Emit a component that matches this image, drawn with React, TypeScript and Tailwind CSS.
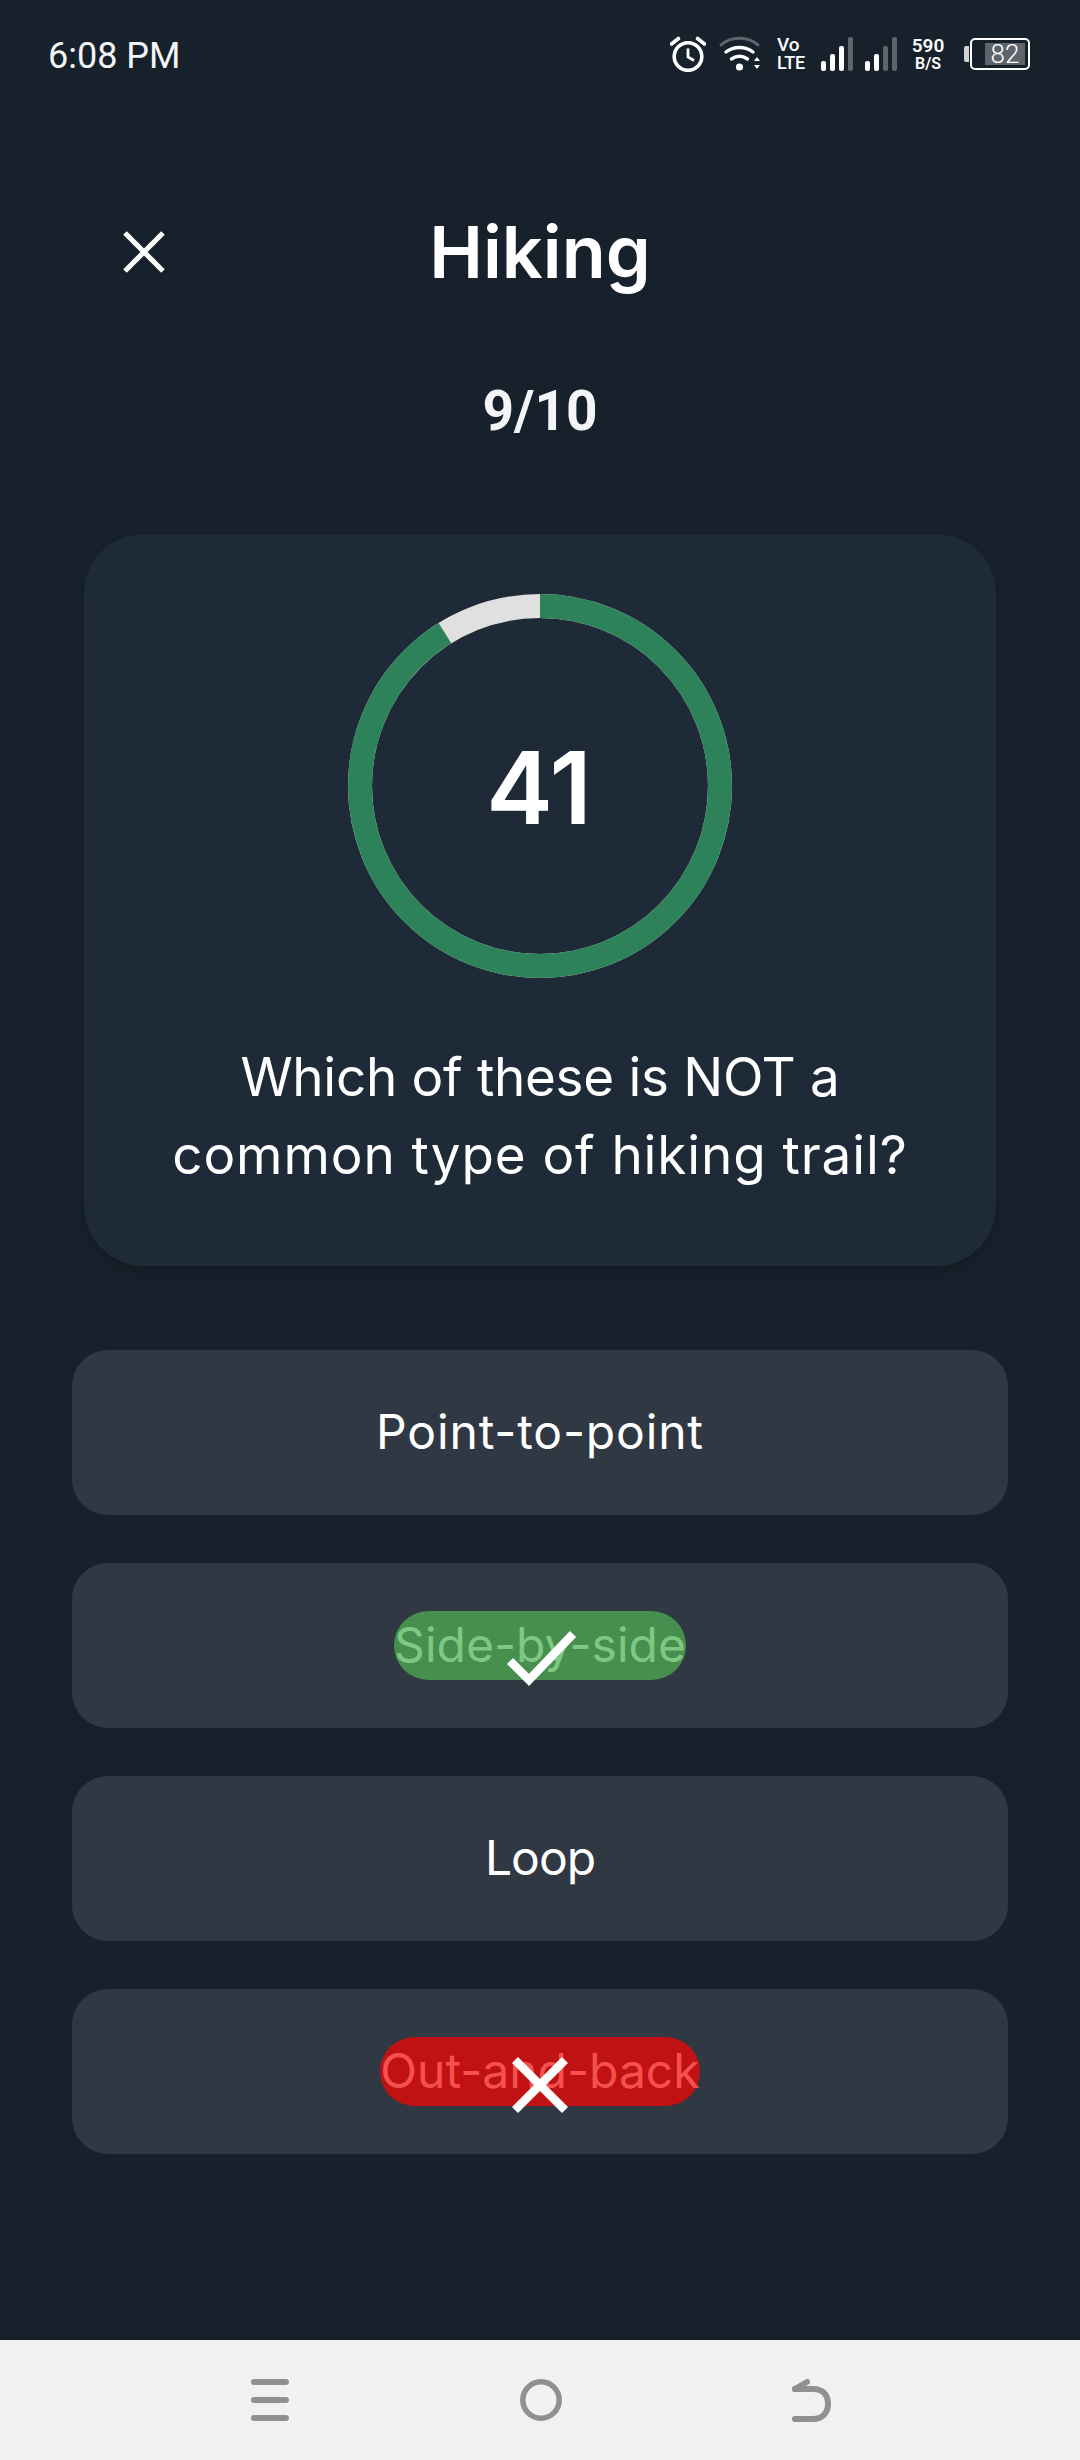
export default function App() {
  const r = 180;
  const c = 2 * Math.PI * r;
  const frac = 0.0889;
  const options = [
    { label: "Point-to-point", track: "tracking-[0.85px]" },
    { label: "Side-by-side", kind: "ok", track: "tracking-[0px]" },
    { label: "Loop", track: "tracking-[-1px]" },
    { label: "Out-and-back", kind: "bad", track: "tracking-[0px]" },
  ];
  return (
    <div className="w-[1080px] h-[2460px] bg-[#17212b] flex flex-col text-white overflow-hidden font-['Inter','Liberation_Sans',sans-serif]">
      {/* Status bar */}
      <div className="h-[108px] flex items-center pl-[48px] pr-[50px] font-['Roboto',sans-serif]">
        <span className="text-[36px] leading-none text-[#f4f5f6] mt-[4px]">6:08 PM</span>
        <div className="ml-auto flex items-center">
          <svg width="36" height="36" viewBox="0 0 36 36" fill="none" stroke="white" strokeWidth="3.6" className="mr-[13px]">
            <circle cx="18" cy="20.5" r="13.8" />
            <path d="M18 12.5v8.5l6 3.5" strokeWidth="2.8" />
            <path d="M1.500 8l7-5.500M34.500 8l-7-5.500" strokeWidth="3.6" strokeLinecap="round" />
          </svg>
          <svg width="42" height="36" viewBox="0 0 42 36" fill="none" className="mr-[16px]">
            <path d="M2 9C12 0 29 0 39 9" stroke="#5d646c" strokeWidth="3" strokeLinecap="round" />
            <path d="M7 16c8-6 19-6 27 0" stroke="white" strokeWidth="3.4" strokeLinecap="round" />
            <path d="M12.5 23c5-3.5 11-3.5 16 0" stroke="white" strokeWidth="3.4" strokeLinecap="round" />
            <circle cx="20.5" cy="31" r="3.6" fill="white" />
            <path d="M35 25h6l-3-4zM35 29h6l-3 4z" fill="white" />
          </svg>
          <div className="flex flex-col items-start w-[30px] mr-[13px] font-medium text-[18px] leading-[18px] tracking-[-0.2px] text-white">
            <span className="text-[19px]">Vo</span>
            <span>LTE</span>
          </div>
          <svg width="33" height="34" viewBox="0 0 33 34" className="mr-[11px]">
            <rect x="1" y="24" width="5" height="10" rx="2" fill="white" />
            <rect x="10" y="17" width="5" height="17" rx="2" fill="white" />
            <rect x="19" y="9" width="5" height="25" rx="2" fill="white" />
            <rect x="28" y="0" width="5" height="34" rx="2" fill="#5d646c" />
          </svg>
          <svg width="33" height="34" viewBox="0 0 33 34" className="mr-[14px]">
            <rect x="1" y="24" width="5" height="10" rx="2" fill="white" />
            <rect x="10" y="17" width="5" height="17" rx="2" fill="white" />
            <rect x="19" y="9" width="5" height="25" rx="2" fill="#5d646c" />
            <rect x="28" y="0" width="5" height="34" rx="2" fill="#5d646c" />
          </svg>
          <div className="flex flex-col items-center w-[34px] mr-[19px] font-semibold leading-none text-white">
            <span className="text-[19px] leading-[20px]">590</span>
            <span className="text-[16px] leading-[16px]">B/S</span>
          </div>
          <div className="flex items-center">
            <div className="w-[5px] h-[16px] bg-white rounded-l-[2px] mr-[1px] opacity-80" />
            <div className="w-[60px] h-[32px] border-2 border-white rounded-[5px] flex items-center pl-[13px] pr-[3px]">
              <span className="w-[40px] h-[22px] bg-[#5d646c] text-[26px] leading-[22px] font-light text-center text-white">82</span>
            </div>
          </div>
        </div>
      </div>

      {/* Header */}
      <div className="mt-[84px] h-[120px] grid grid-cols-[1fr_auto_1fr] items-center px-[123px]">
        <svg width="42" height="42" viewBox="0 0 42 42" fill="none" stroke="white" strokeWidth="5">
          <path d="M2 2L40 40M40 2L2 40" />
        </svg>
        <span className="text-[72px] leading-none font-semibold tracking-[0px] text-white">Hiking</span>
        <span />
      </div>

      <div className="mt-[69px] h-[60px] flex items-center justify-center font-['Roboto',sans-serif] text-[55px] leading-none font-bold text-[#f4f5f6]">
        9/10
      </div>

      {/* Question card */}
      <div className="mt-[93px] mx-[84px] h-[732px] rounded-[60px] bg-[#1e2a38] shadow-[0_6px_10px_rgba(0,0,0,0.14)] flex flex-col items-center pt-[60px]">
        <div className="relative w-[384px] h-[384px] flex items-center justify-center">
          <svg width="384" height="384" viewBox="0 0 384 384" className="absolute inset-0 -rotate-90">
            <circle cx="192" cy="192" r={r} fill="none" stroke="#e0e0e0" strokeWidth="24" />
            <circle
              cx="192"
              cy="192"
              r={r}
              fill="none"
              stroke="#2e8259"
              strokeWidth="24"
              strokeDasharray={`${c * (1 - frac)} ${c}`}
            />
          </svg>
          <span className="text-[100px] leading-none font-semibold text-white mt-[3px] mr-[2px]">41</span>
        </div>
        <p className="mt-[60px] text-center text-[53px] leading-[78px] text-white">
          <span className="tracking-[-0.3px]">Which of these is NOT a</span>
          <br />
          <span className="tracking-[0.9px]">common type of hiking trail?</span>
        </p>
      </div>

      {/* Options */}
      <div className="mt-[84px] mx-[72px] flex flex-col gap-[48px]">
        {options.map((o) => (
          <div key={o.label} className="relative h-[165px] rounded-[36px] bg-[#303844] flex items-center justify-center">
            <span
              className={
                "h-[69px] rounded-full text-[48px] leading-[67px] " +
                o.track +
                " " +
                (o.kind === "ok"
                  ? "bg-[#478f4f] text-[#7ec883]"
                  : o.kind === "bad"
                    ? "bg-[#c01212] text-[#f55050]"
                    : "text-white")
              }
            >
              {o.label}
            </span>
            {o.kind === "ok" && (
              <svg width="72" height="56" viewBox="0 0 72 56" fill="none" stroke="white" strokeWidth="8.5" className="absolute left-[433px] top-[68px]">
                <path d="M5 30L24 49L68 3" />
              </svg>
            )}
            {o.kind === "bad" && (
              <svg width="56" height="56" viewBox="0 0 56 56" fill="none" stroke="white" strokeWidth="8.5" className="absolute left-[440px] top-[68px]">
                <path d="M3 3L53 53M53 3L3 53" />
              </svg>
            )}
          </div>
        ))}
      </div>

      {/* Nav bar */}
      <div className="mt-auto h-[120px] bg-[#f1f1f1] flex items-center justify-between pl-[251px] pr-[249px]">
        <svg width="38" height="42" viewBox="0 0 38 42" fill="#909090">
          <rect x="0" y="0" width="38" height="6" rx="3" />
          <rect x="0" y="18" width="38" height="6" rx="3" />
          <rect x="0" y="36" width="38" height="6" rx="3" />
        </svg>
        <svg width="42" height="42" viewBox="0 0 42 42" fill="none" stroke="#909090" strokeWidth="5.5">
          <circle cx="21" cy="21" r="18.2" />
        </svg>
        <svg width="39" height="43" viewBox="0 0 39 43" fill="none" stroke="#909090" strokeWidth="6" strokeLinecap="round" strokeLinejoin="round">
          <path d="M3 10H21C30 10 36 15 36 25C36 34 30 40 21 40H3" />
          <path d="M3 10L15 3" />
        </svg>
      </div>
    </div>
  );
}
